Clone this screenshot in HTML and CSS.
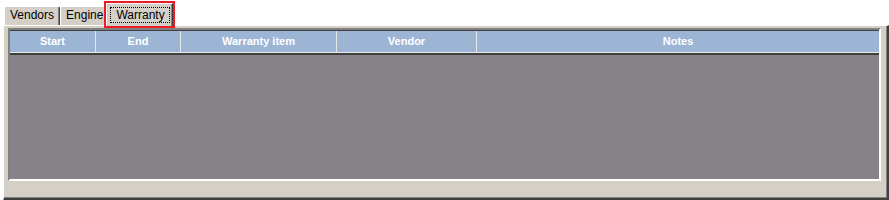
FILE: index.html
```html
<!DOCTYPE html>
<html lang="en">

<head>
  <meta charset="UTF-8">
  <title>Warranty</title>
  <link rel="stylesheet" href="styles.css">
</head>

<body>
  <div class="tabs">
    <div class="tab">Vendors</div>
    <div class="tab">Engine</div>
    <div class="tab active"><span class="focus">Warranty</span></div>
  </div>
  <div class="panel">
    <div class="grid">
      <div class="grid-head">
        <div class="col">Start</div>
        <div class="col">End</div>
        <div class="col">Warranty item</div>
        <div class="col">Vendor</div>
        <div class="col">Notes</div>
      </div>
      <div class="grid-body"></div>
    </div>
  </div>
</body>

</html>
```

FILE: styles.css
```css
* {
  margin: 0;
  padding: 0;
  box-sizing: border-box;
}

body {
  background-color: #fff;
  font-family: "Liberation Sans", Arial, sans-serif;
  font-size: 12px;
  width: 889px;
  height: 200px;
  overflow: hidden;
}

.tabs {
  display: flex;
  align-items: flex-end;
  height: 25px;
  padding-left: 4px;
  position: relative;
  z-index: 2;
}

.tab {
  height: 19px;
  line-height: 17px;
  padding: 0 5px 0 5px;
  color: #000;
  background-color: #d4d0c8;
  border-top: 1px solid #fff;
  border-left: 1px solid #fff;
  border-right: 1px solid #404040;
  box-shadow: inset -1px 0 #808080;
  border-radius: 2px 2px 0 0;
}

.tab.active {
  height: 23px;
  margin: 0 -2px -1px -3px;
  padding: 3px 2px 0 3px;
  position: relative;
  border-radius: 0;
  outline: 2px solid #ec1c24;
  outline-offset: 0;
}

.focus {
  display: block;
  height: 16px;
  line-height: 14px;
  padding: 0 4px 0 5px;
  border: 1px dotted #000;
}

.panel {
  margin-left: 3px;
  height: 175px;
  background-color: #d4d0c8;
  border-top: 1px solid #fff;
  border-left: 1px solid #fff;
  border-right: 2px solid #404040;
  border-bottom: 2px solid #404040;
  box-shadow: inset -1px -1px #808080;
  padding: 2px 6px 0 4px;
}

.grid {
  height: 153px;
  display: flex;
  flex-direction: column;
  border-top: 2px solid #808080;
  border-left: 2px solid #808080;
  border-right: 2px solid #fff;
  border-bottom: 2px solid #fff;
  box-shadow: inset 1px 1px #404040;
  padding: 1px 0 0 0;
}

.grid-head {
  display: grid;
  grid-template-columns: 86px 85px 156px 140px 1fr;
  height: 24px;
  background-color: #9cb5d5;
  border-bottom: 2px solid #404040;
  box-shadow: inset 0 -1px #e8e8e8;
}

.col {
  color: #fff;
  font-weight: bold;
  font-size: 11px;
  text-align: center;
  line-height: 21px;
  border-right: 1px solid #e4e6ea;
  margin-bottom: 1px;
}

.col:last-child {
  border-right: none;
}

.grid-body {
  flex: 1;
  background-color: #858387;
}
```
